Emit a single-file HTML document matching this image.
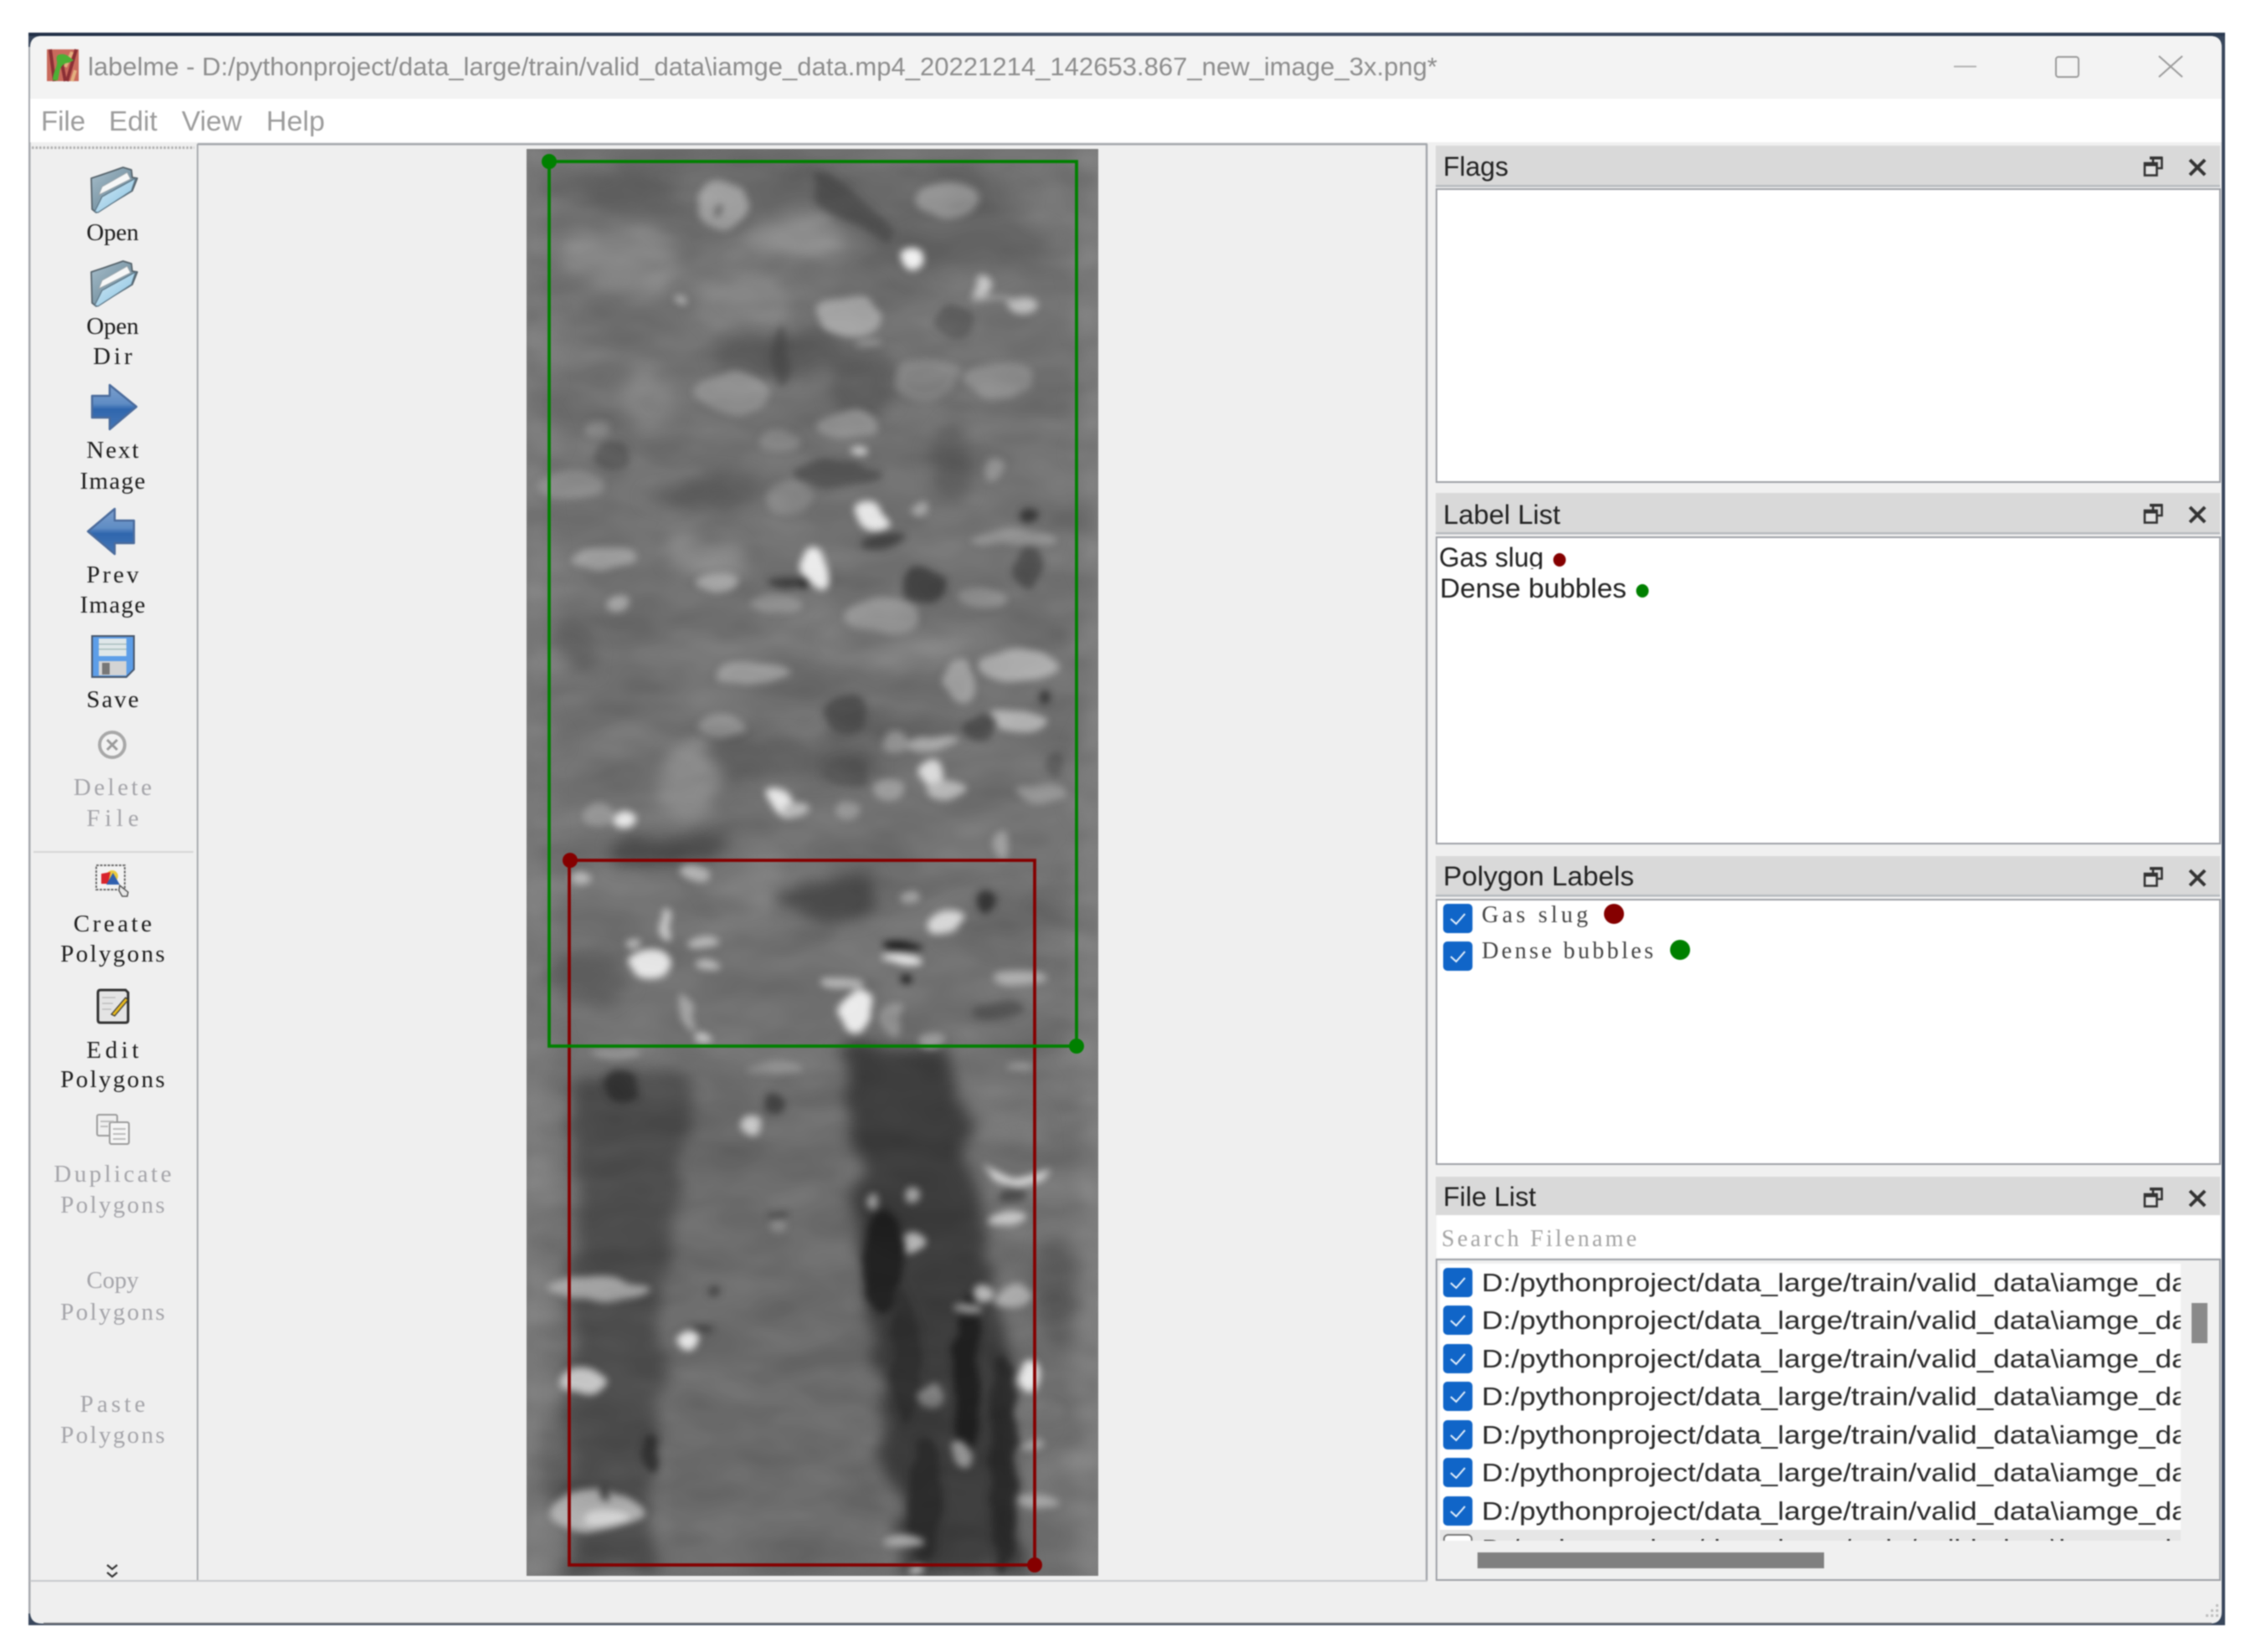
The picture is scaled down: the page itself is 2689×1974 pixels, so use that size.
<!DOCTYPE html>
<html lang="en"><head><meta charset="utf-8"><title>labelme</title>
<style>
html,body{margin:0;padding:0;background:#fff;width:2689px;height:1974px;overflow:hidden}
svg{display:block;position:absolute;left:0;top:0;filter:blur(.7px)}
.s{font-family:"Liberation Sans",sans-serif}
.m{font-family:"Liberation Serif",serif;font-size:29px;fill:#1c1c1c}
.d{fill:#a4a4a9}
.h{font-family:"Liberation Sans",sans-serif;font-size:32px;fill:#222}
.f{font-family:"Liberation Sans",sans-serif;font-size:31px;fill:#2a2a2a}
</style></head><body>
<svg width="2689" height="1974" viewBox="0 0 2689 1974" xmlns="http://www.w3.org/2000/svg">
<defs>
<filter id="b1" filterUnits="userSpaceOnUse" x="560" y="120" width="820" height="1820" color-interpolation-filters="sRGB">
<feTurbulence type="fractalNoise" baseFrequency="0.012 0.022" numOctaves="3" seed="4" result="n"/>
<feDisplacementMap in="SourceGraphic" in2="n" scale="50" xChannelSelector="R" yChannelSelector="G" result="d"/>
<feGaussianBlur in="d" stdDeviation="9"/></filter>
<filter id="b2" filterUnits="userSpaceOnUse" x="560" y="120" width="820" height="1820" color-interpolation-filters="sRGB">
<feTurbulence type="fractalNoise" baseFrequency="0.015 0.03" numOctaves="2" seed="9" result="n"/>
<feDisplacementMap in="SourceGraphic" in2="n" scale="20" xChannelSelector="R" yChannelSelector="G" result="d"/>
<feGaussianBlur in="d" stdDeviation="4.500"/></filter>
<filter id="tex" filterUnits="userSpaceOnUse" x="629" y="178" width="683" height="1704" color-interpolation-filters="sRGB">
<feTurbulence type="fractalNoise" baseFrequency="0.01 0.025" numOctaves="3" seed="21"/>
<feColorMatrix type="matrix" values="1 0 0 0 0 1 0 0 0 0 1 0 0 0 0 0 0 0 0 1"/>
<feGaussianBlur stdDeviation="4"/></filter>
<clipPath id="img"><rect x="629" y="178" width="683" height="1705"/></clipPath>
<clipPath id="fl"><rect x="1720" y="1508" width="885" height="333"/></clipPath>
<clipPath id="r1"><rect x="1716" y="644" width="400" height="36"/></clipPath>
<linearGradient id="top" x1="0" x2="1"><stop offset="0" stop-color="#1f2e45"/><stop offset=".5" stop-color="#46546a"/><stop offset="1" stop-color="#2a3950"/></linearGradient>
<linearGradient id="fb" x1="0" y1="0" x2="1" y2="1"><stop offset="0" stop-color="#a9c0cd"/><stop offset=".5" stop-color="#7f9aa9"/><stop offset="1" stop-color="#6c8594"/></linearGradient>
<linearGradient id="ff" x1="0" y1="0" x2="1" y2="1"><stop offset="0" stop-color="#d6ecf7"/><stop offset="1" stop-color="#84bfdf"/></linearGradient>
<linearGradient id="ar" x1="0" y1="0" x2="0" y2="1"><stop offset="0" stop-color="#7c9fcc"/><stop offset=".42" stop-color="#5f8cc4"/><stop offset=".55" stop-color="#2f66ad"/><stop offset="1" stop-color="#4576b6"/></linearGradient>
<g id="folder">
<path d="M109 213 L127 207 L147 200 L157 203 L158 212 L164 213 L158 228 L115 254 L110 250 Z" fill="url(#fb)" stroke="#56636b" stroke-width="1.800" stroke-linejoin="round"/>
<path d="M118 233 L122 223 L152 206 L156 214 Z" fill="#f6f7f7" stroke="#9aa4aa" stroke-width="1"/>
<path d="M113 253 L122 235 L162 213 L157 228 L117 254 Z" fill="url(#ff)" stroke="#5b7484" stroke-width="1.200" stroke-linejoin="round"/>
</g>
<g id="chk"><rect x="0" y="0" width="35" height="35" rx="5" fill="#1065c8"/><path d="M9 18 L15.500 24 L26 12" fill="none" stroke="#e8f2fc" stroke-width="2"/></g>
<g id="dock">
<path d="M2572 195 V188.500 H2582.500 V201 H2577" fill="none" stroke="#333" stroke-width="2.600"/>
<rect x="2568" y="187" width="15" height="3.500" fill="#333"/>
<rect x="2562" y="195" width="14.500" height="14.500" fill="#e2e2e2" stroke="#333" stroke-width="2.600"/>
<rect x="2561" y="194" width="16" height="4.500" fill="#333"/>
<path d="M2616 191 L2634 209 M2634 191 L2616 209" stroke="#333" stroke-width="4"/>
</g>
</defs>

<!-- window frame -->
<rect x="34" y="39" width="2624" height="1903" fill="#38465b"/>
<rect x="34" y="39" width="2624" height="4" fill="url(#top)"/>
<path d="M50 43 H2640 Q2654 43 2654 57 V1926 Q2654 1940 2640 1940 H50 Q36 1940 36 1926 V57 Q36 43 50 43 Z" fill="#efefef"/>
<rect x="34" y="56" width="2.500" height="1872" fill="#a5a8ad"/>
<rect x="52" y="1939" width="2590" height="2" fill="#6a6d74"/>

<!-- title bar -->
<path d="M50 43 H2640 Q2654 43 2654 57 V118 H36 V57 Q36 43 50 43 Z" fill="#f3f3f3"/>
<g>
<rect x="56" y="59" width="38" height="38" fill="#c96a5c"/>
<path d="M60 59 L65 97 M74 76 L78 97 M91 59 L80 97" stroke="#8b2f35" stroke-width="4"/>
<path d="M86 62 L78 80 M90 84 L86 97" stroke="#e3b07f" stroke-width="4"/>
<path d="M63 96 C63 86 69 80 68 73 C66 66 70 64 77 65 C81 66 85 70 88 72 L82 75 C76 75 72 80 71 86 L69 96 Z" fill="#4cb035"/>
</g>
<text x="105" y="90" class="s" font-size="31" fill="#8d8d8d" textLength="1612" lengthAdjust="spacingAndGlyphs">labelme - D:/pythonproject/data_large/train/valid_data\iamge_data.mp4_20221214_142653.867_new_image_3x.png*</text>
<rect x="2334" y="78.500" width="27" height="2" fill="#b3b3b3"/>
<rect x="2456" y="68" width="27" height="24" rx="3" fill="none" stroke="#9a9a9a" stroke-width="2"/>
<path d="M2579 67 L2607 92 M2607 67 L2579 92" stroke="#9a9a9a" stroke-width="2"/>

<!-- menu -->
<rect x="36" y="118" width="2618" height="52" fill="#fff"/>
<g class="s" font-size="33" fill="#9c9c9c">
<text x="49" y="156" textLength="53" lengthAdjust="spacingAndGlyphs">File</text>
<text x="130" y="156" textLength="58" lengthAdjust="spacingAndGlyphs">Edit</text>
<text x="217" y="156" textLength="72" lengthAdjust="spacingAndGlyphs">View</text>
<text x="318" y="156" textLength="70" lengthAdjust="spacingAndGlyphs">Help</text>
</g>

<!-- toolbar -->
<path d="M38 176.500 H232" stroke="#b0b0b0" stroke-width="3" stroke-dasharray="2.500 2"/>
<rect x="235" y="172" width="2.500" height="1717" fill="#a5a8ad"/>
<use href="#folder"/>
<use href="#folder" y="112"/>
<text class="m" x="103.300" y="287" textLength="62.400">Open</text>
<text class="m" x="103.300" y="399" textLength="62.400">Open</text>
<text class="m" x="111.100" y="435" textLength="46.800">Dir</text>
<path d="M110 473 H131 V460 L163 486 L131 513 V499 H110 Z" fill="url(#ar)" stroke="#4a6b9c" stroke-width="2.500" stroke-linejoin="round"/>
<text class="m" x="103.300" y="547" textLength="62.400">Next</text>
<text class="m" x="95.500" y="584" textLength="78">Image</text>
<path d="M160 622 H137 V608 L105 635 L137 662 V649 H160 Z" fill="url(#ar)" stroke="#4a6b9c" stroke-width="2.500" stroke-linejoin="round"/>
<text class="m" x="103.300" y="696" textLength="62.400">Prev</text>
<text class="m" x="95.500" y="732" textLength="78">Image</text>
<g>
<path d="M110 760 H160 V800 L151 809 H110 Z" fill="#5d9ee8" stroke="#46556a" stroke-width="2"/>
<rect x="118" y="763" width="33" height="21" fill="#dfe7e9"/>
<rect x="118" y="769" width="33" height="1.500" fill="#a8bcbc"/>
<rect x="118" y="775" width="33" height="1.500" fill="#a8bcbc"/>
<rect x="118" y="790" width="33" height="17" fill="#d4d4d4"/>
<rect x="122" y="792" width="9" height="14" fill="#777"/>
</g>
<text class="m" x="103.300" y="845" textLength="62.400">Save</text>
<circle cx="134" cy="890" r="15" fill="#f2f2f2" stroke="#a8a8a8" stroke-width="4"/>
<path d="M128 884 L140 896 M140 884 L128 896" stroke="#9a9a9a" stroke-width="3"/>
<text class="m d" x="87.700" y="950" textLength="93.600">Delete</text>
<text class="m d" x="103.300" y="987" textLength="62.400">File</text>
<rect x="40" y="1017" width="191" height="2" fill="#d6d6d6"/>
<g>
<rect x="115" y="1034" width="34" height="29" fill="#f2f2f2" stroke="#666" stroke-width="2" stroke-dasharray="3 1.500"/>
<circle cx="134" cy="1047" r="7" fill="#eacb3c"/>
<path d="M121 1044 L132 1042 L129 1056 L121 1056 Z" fill="#d8242c"/>
<path d="M127 1057 L135 1043 L143 1057 Z" fill="#2f5fae"/>
<path d="M143 1058 L153 1066 L152 1071 L146 1071 L142 1064 Z" fill="#e8e8e8" stroke="#555" stroke-width="1.500"/>
</g>
<text class="m" x="87.700" y="1113" textLength="93.600">Create</text>
<text class="m" x="72.100" y="1149" textLength="124.800">Polygons</text>
<g>
<path d="M120 1183 H150 L153 1186 V1219 Q153 1222 150 1222 H120 Q117 1222 117 1219 V1186 Q117 1183 120 1183 Z" fill="#e4e4e4" stroke="#333" stroke-width="3"/>
<path d="M122 1192H138M122 1199H135M122 1206H133" stroke="#bbb" stroke-width="1.500"/>
<path d="M133 1212 L150 1192 L153 1195 L137 1214 Z" fill="#e6b81e" stroke="#333" stroke-width="1.200"/>
</g>
<text class="m" x="103.300" y="1264" textLength="62.400">Edit</text>
<text class="m" x="72.100" y="1299" textLength="124.800">Polygons</text>
<g fill="#efefef" stroke="#9a9a9a" stroke-width="2">
<rect x="116" y="1332" width="24" height="25" rx="2"/>
<rect x="131" y="1341" width="23" height="26" rx="2" fill="#f5f5f5"/>
<path d="M120 1340h16M120 1346h9M135 1349h15M135 1355h15M135 1361h15" stroke="#bbb" stroke-width="2"/>
</g>
<text class="m d" x="64.300" y="1412" textLength="140.400">Duplicate</text>
<text class="m d" x="72.100" y="1449" textLength="124.800">Polygons</text>
<text class="m d" x="103.300" y="1539" textLength="62.400">Copy</text>
<text class="m d" x="72.100" y="1577" textLength="124.800">Polygons</text>
<text class="m d" x="95.500" y="1687" textLength="78">Paste</text>
<text class="m d" x="72.100" y="1724" textLength="124.800">Polygons</text>
<path d="M128 1870 L134 1875 L140 1870 M128 1879 L134 1884 L140 1879" fill="none" stroke="#333" stroke-width="2.200"/>

<!-- canvas -->
<rect x="237" y="172" width="1467" height="1716" fill="#efefef"/>
<rect x="236" y="171" width="1469" height="2.500" fill="#a5a8ad"/>
<rect x="1703" y="172" width="2.500" height="1717" fill="#a5a8ad"/>
<rect x="36" y="1888" width="1669" height="2" fill="#c8c9cc"/>

<g clip-path="url(#img)">
<rect x="629" y="178" width="683" height="1705" fill="#717171"/>
<g filter="url(#b1)">
<rect x="600" y="150" width="58" height="1760" fill="#787878"/>
<rect x="1290" y="150" width="50" height="1760" fill="#7c7c7c"/>
<g transform="translate(620,170) scale(.4464,.574)">
<ellipse cx="700" cy="100" rx="650" ry="70" fill="#686868"/>
<ellipse cx="300" cy="100" rx="100" ry="50" fill="#5f5f5f"/>
<ellipse cx="1180" cy="210" rx="250" ry="70" fill="#646464"/>
<ellipse cx="280" cy="240" rx="170" ry="70" fill="#828282"/>
<ellipse cx="730" cy="190" rx="140" ry="45" fill="#868686"/>
<ellipse cx="600" cy="330" rx="130" ry="55" fill="#838383"/>
<ellipse cx="700" cy="440" rx="170" ry="60" fill="#606060"/>
<ellipse cx="920" cy="510" rx="90" ry="70" fill="#585858"/>
<ellipse cx="350" cy="540" rx="70" ry="55" fill="#828282"/>
<ellipse cx="1160" cy="680" rx="55" ry="80" fill="#5c5c5c"/>
<ellipse cx="500" cy="740" rx="160" ry="35" fill="#5f5f5f"/>
<ellipse cx="520" cy="860" rx="90" ry="55" fill="#8a8a8a"/>
<ellipse cx="1000" cy="1050" rx="200" ry="60" fill="#7a7a7a"/>
<ellipse cx="150" cy="1050" rx="60" ry="40" fill="#5e5e5e"/>
<ellipse cx="700" cy="1290" rx="260" ry="50" fill="#5d5d5d"/>
<ellipse cx="460" cy="1330" rx="70" ry="75" fill="#8a8a8a"/>
<ellipse cx="1000" cy="1220" rx="200" ry="35" fill="#626262"/>
<ellipse cx="400" cy="1465" rx="150" ry="35" fill="#4e4e4e"/>
</g>
<g transform="translate(620,1000) scale(.4464,.574)">
<rect x="400" y="500" width="560" height="1040" fill="#6b6b6b"/>
<path d="M140 560 C180 480 400 470 450 520 L440 780 L380 960 L370 1530 L130 1530 L110 1250 L150 1000 L140 800 Z" fill="#4c4c4c"/>
<path d="M880 430 L1150 430 L1240 800 L1260 950 L1350 1530 L1030 1530 L950 1060 L900 800 Z" fill="#3c3c3c"/>
<ellipse cx="830" cy="130" rx="130" ry="50" fill="#4a4a4a"/>
<ellipse cx="1300" cy="170" rx="170" ry="60" fill="#6a6a6a"/>
<ellipse cx="1440" cy="950" rx="60" ry="120" fill="#5e5e5e"/>
<ellipse cx="200" cy="290" rx="100" ry="60" fill="#5e5e5e"/>
<ellipse cx="600" cy="100" rx="120" ry="60" fill="#7c7c7c"/>
<ellipse cx="90" cy="1300" rx="40" ry="90" fill="#646464"/>
<ellipse cx="1300" cy="600" rx="90" ry="50" fill="#7a7a7a"/>
</g>
</g>
<g filter="url(#b2)" opacity=".92">
<g transform="translate(620,170) scale(.4464,.574)">
<path d="M780 60 L830 70 L1020 190 L990 210 L810 130 Z" fill="#4e4e4e"/>
<ellipse cx="540" cy="130" rx="60" ry="48" fill="#a2a2a2"/>
<ellipse cx="530" cy="140" rx="8" ry="15" fill="#555"/>
<ellipse cx="1150" cy="120" rx="85" ry="38" fill="#989898"/>
<ellipse cx="1050" cy="243" rx="33" ry="22" fill="#fff"/>
<ellipse cx="880" cy="360" rx="85" ry="42" fill="#a8a8a8"/>
<ellipse cx="930" cy="420" rx="40" ry="10" fill="#999"/>
<ellipse cx="430" cy="328" rx="14" ry="6" fill="#bbb"/>
<ellipse cx="1235" cy="300" rx="22" ry="22" fill="#ccc"/>
<ellipse cx="1350" cy="345" rx="42" ry="16" fill="#c4c4c4"/>
<path d="M1220 315 L1340 335" stroke="#aaa" stroke-width="8"/>
<ellipse cx="1170" cy="370" rx="50" ry="38" fill="#565656"/>
<ellipse cx="700" cy="450" rx="26" ry="60" fill="#505050"/>
<ellipse cx="570" cy="520" rx="95" ry="42" fill="#8e8e8e"/>
<ellipse cx="1090" cy="490" rx="85" ry="42" fill="#878787"/>
<ellipse cx="1280" cy="495" rx="95" ry="36" fill="#8c8c8c"/>
<ellipse cx="880" cy="590" rx="85" ry="27" fill="#969696"/>
<ellipse cx="700" cy="620" rx="55" ry="27" fill="#8c8c8c"/>
<ellipse cx="910" cy="645" rx="22" ry="11" fill="#d2d2d2"/>
<ellipse cx="850" cy="690" rx="120" ry="20" fill="#505050"/>
<ellipse cx="1265" cy="680" rx="27" ry="27" fill="#979797"/>
<ellipse cx="210" cy="595" rx="38" ry="16" fill="#8c8c8c"/>
<ellipse cx="250" cy="650" rx="50" ry="30" fill="#555"/>
<ellipse cx="140" cy="715" rx="85" ry="30" fill="#8c8c8c"/>
<ellipse cx="720" cy="735" rx="60" ry="35" fill="#868686"/>
<ellipse cx="945" cy="780" rx="44" ry="24" fill="#f2f2f2" transform="rotate(20 945 780)"/>
<ellipse cx="1075" cy="760" rx="22" ry="15" fill="#aaa"/>
<ellipse cx="980" cy="830" rx="65" ry="15" fill="#444"/>
<ellipse cx="1365" cy="772" rx="28" ry="20" fill="#333"/>
<ellipse cx="1320" cy="822" rx="115" ry="17" fill="#979797"/>
<ellipse cx="1360" cy="885" rx="36" ry="42" fill="#4a4a4a"/>
<ellipse cx="230" cy="868" rx="92" ry="26" fill="#a0a0a0"/>
<ellipse cx="535" cy="915" rx="55" ry="20" fill="#aaa"/>
<ellipse cx="795" cy="895" rx="28" ry="48" fill="#f7f7f7" transform="rotate(-35 795 895)"/>
<ellipse cx="715" cy="915" rx="52" ry="15" fill="#3c3c3c"/>
<ellipse cx="762" cy="920" rx="15" ry="15" fill="#222"/>
<ellipse cx="1085" cy="925" rx="58" ry="38" fill="#404040"/>
<ellipse cx="1240" cy="955" rx="65" ry="22" fill="#8f8f8f"/>
<ellipse cx="970" cy="985" rx="95" ry="38" fill="#989898"/>
<ellipse cx="690" cy="965" rx="62" ry="15" fill="#8f8f8f"/>
<ellipse cx="265" cy="960" rx="26" ry="20" fill="#aaa"/>
<ellipse cx="1340" cy="1090" rx="105" ry="32" fill="#b0b0b0"/>
<ellipse cx="1180" cy="1120" rx="42" ry="42" fill="#a6a6a6"/>
<ellipse cx="630" cy="1105" rx="105" ry="23" fill="#a0a0a0"/>
<ellipse cx="1410" cy="1155" rx="15" ry="13" fill="#333"/>
<ellipse cx="1330" cy="1200" rx="85" ry="26" fill="#bbb"/>
<ellipse cx="880" cy="1195" rx="60" ry="42" fill="#4a4a4a"/>
<ellipse cx="1230" cy="1220" rx="42" ry="32" fill="#4a4a4a"/>
<ellipse cx="540" cy="1215" rx="65" ry="18" fill="#969696"/>
<ellipse cx="1100" cy="1250" rx="80" ry="10" fill="#aaa"/>
<ellipse cx="1000" cy="1250" rx="30" ry="22" fill="#999"/>
<ellipse cx="1100" cy="1315" rx="34" ry="32" fill="#e4e4e4"/>
<ellipse cx="1140" cy="1345" rx="62" ry="16" fill="#bfbfbf"/>
<ellipse cx="1440" cy="1295" rx="24" ry="25" fill="#565656"/>
<ellipse cx="880" cy="1310" rx="62" ry="30" fill="#555"/>
<ellipse cx="700" cy="1375" rx="46" ry="22" fill="#f2f2f2" transform="rotate(25 700 1375)"/>
<ellipse cx="745" cy="1392" rx="42" ry="10" fill="#bfbfbf"/>
<ellipse cx="985" cy="1345" rx="42" ry="20" fill="#a0a0a0"/>
<ellipse cx="880" cy="1385" rx="32" ry="15" fill="#989898"/>
<ellipse cx="1400" cy="1350" rx="62" ry="15" fill="#9a9a9a"/>
<ellipse cx="280" cy="1410" rx="36" ry="15" fill="#f2f2f2"/>
<ellipse cx="210" cy="1400" rx="42" ry="26" fill="#969696"/>
<ellipse cx="1290" cy="1465" rx="26" ry="32" fill="#a4a4a4"/>
</g>
<g transform="translate(620,1000) scale(.4464,.574)">
<ellipse cx="1240" cy="135" rx="28" ry="26" fill="#303030"/>
<ellipse cx="1140" cy="175" rx="42" ry="20" fill="#e0e0e0"/>
<ellipse cx="1040" cy="125" rx="26" ry="10" fill="#aaa"/>
<ellipse cx="350" cy="265" rx="58" ry="32" fill="#f2f2f2"/>
<ellipse cx="390" cy="180" rx="16" ry="32" fill="#cfcfcf"/>
<ellipse cx="490" cy="220" rx="42" ry="12" fill="#c0c0c0"/>
<ellipse cx="510" cy="270" rx="32" ry="13" fill="#c0c0c0"/>
<ellipse cx="310" cy="220" rx="20" ry="12" fill="#c0c0c0"/>
<ellipse cx="450" cy="360" rx="16" ry="46" fill="#ababab" transform="rotate(-30 450 360)"/>
<ellipse cx="495" cy="415" rx="20" ry="15" fill="#ccc"/>
<ellipse cx="160" cy="85" rx="26" ry="15" fill="#bbb"/>
<ellipse cx="475" cy="72" rx="42" ry="15" fill="#bbb"/>
<ellipse cx="1030" cy="225" rx="62" ry="12" fill="#0e0e0e"/>
<ellipse cx="1025" cy="258" rx="58" ry="10" fill="#f0f0f0"/>
<ellipse cx="1035" cy="295" rx="16" ry="8" fill="#0e0e0e"/>
<ellipse cx="905" cy="360" rx="46" ry="46" fill="#f7f7f7"/>
<ellipse cx="860" cy="305" rx="52" ry="12" fill="#bfbfbf"/>
<ellipse cx="1000" cy="380" rx="32" ry="32" fill="#999"/>
<ellipse cx="1100" cy="415" rx="32" ry="15" fill="#999"/>
<ellipse cx="1340" cy="295" rx="72" ry="20" fill="#b0b0b0"/>
<ellipse cx="1280" cy="360" rx="62" ry="20" fill="#555"/>
<ellipse cx="260" cy="450" rx="62" ry="10" fill="#979797"/>
<ellipse cx="680" cy="480" rx="72" ry="12" fill="#8e8e8e"/>
<ellipse cx="1340" cy="482" rx="32" ry="10" fill="#999"/>
<ellipse cx="270" cy="520" rx="42" ry="32" fill="#2e2e2e"/>
<ellipse cx="680" cy="560" rx="25" ry="20" fill="#3e3e3e"/>
<ellipse cx="625" cy="605" rx="25" ry="20" fill="#d0d0d0"/>
<path d="M1240 690 L1320 715 L1420 690 L1400 715 L1325 735 L1260 715 Z" fill="#e4e4e4"/>
<ellipse cx="1310" cy="795" rx="52" ry="15" fill="#d0d0d0"/>
<ellipse cx="1320" cy="750" rx="40" ry="12" fill="#444"/>
<ellipse cx="950" cy="755" rx="16" ry="16" fill="#ababab"/>
<ellipse cx="1050" cy="755" rx="22" ry="16" fill="#ababab"/>
<ellipse cx="1050" cy="850" rx="32" ry="20" fill="#c0c0c0"/>
<ellipse cx="975" cy="880" rx="55" ry="110" fill="#1e1e1e"/>
<ellipse cx="1200" cy="1120" rx="38" ry="170" fill="#1c1c1c"/>
<ellipse cx="1295" cy="1310" rx="38" ry="230" fill="#282828"/>
<ellipse cx="1085" cy="1380" rx="48" ry="130" fill="#2a2a2a"/>
<ellipse cx="1035" cy="1080" rx="40" ry="140" fill="#2e2e2e"/>
<ellipse cx="695" cy="810" rx="25" ry="15" fill="#8a8a8a"/>
<rect x="670" y="782" width="52" height="7" fill="#333"/>
<ellipse cx="210" cy="940" rx="135" ry="22" fill="#aaa"/>
<ellipse cx="1240" cy="945" rx="26" ry="16" fill="#c0c0c0"/>
<ellipse cx="1320" cy="955" rx="46" ry="20" fill="#b0b0b0"/>
<ellipse cx="1200" cy="980" rx="42" ry="10" fill="#999"/>
<ellipse cx="450" cy="1048" rx="32" ry="15" fill="#f2f2f2"/>
<ellipse cx="485" cy="1025" rx="32" ry="6" fill="#333"/>
<ellipse cx="525" cy="950" rx="15" ry="15" fill="#444"/>
<ellipse cx="170" cy="1135" rx="62" ry="30" fill="#d0d0d0"/>
<ellipse cx="1360" cy="1125" rx="30" ry="36" fill="#f2f2f2"/>
<ellipse cx="1395" cy="1200" rx="62" ry="22" fill="#7b7b7b"/>
<ellipse cx="1100" cy="1165" rx="36" ry="20" fill="#7b7b7b"/>
<ellipse cx="1185" cy="1285" rx="26" ry="26" fill="#9c9c9c"/>
<ellipse cx="1370" cy="1265" rx="26" ry="12" fill="#ababab"/>
<ellipse cx="1395" cy="1385" rx="52" ry="12" fill="#ababab"/>
<ellipse cx="210" cy="1400" rx="125" ry="42" fill="#b4b4b4"/>
<ellipse cx="240" cy="1420" rx="62" ry="15" fill="#ddd"/>
<ellipse cx="225" cy="1365" rx="10" ry="16" fill="#333"/>
<ellipse cx="350" cy="1280" rx="22" ry="42" fill="#2e2e2e"/>
<ellipse cx="1035" cy="1470" rx="62" ry="15" fill="#ababab"/>
<ellipse cx="1060" cy="1528" rx="20" ry="8" fill="#f2f2f2"/>
</g>
</g>
<rect x="629" y="178" width="683" height="1060" filter="url(#tex)" opacity=".16" style="mix-blend-mode:overlay"/>
<!-- polygons -->
<rect x="680" y="1028" width="556" height="842" fill="none" stroke="#850000" stroke-width="3.800"/>
<circle cx="681" cy="1028" r="9" fill="#850000"/>
<circle cx="1236" cy="1870" r="9" fill="#850000"/>
<rect x="656" y="193" width="630" height="1057" fill="none" stroke="#008000" stroke-width="3.800"/>
<circle cx="656" cy="193" r="9" fill="#008000"/>
<circle cx="1286" cy="1250" r="9" fill="#008000"/>
</g>

<!-- right docks -->
<rect x="1706" y="170" width="948" height="1719" fill="#f0f0f0"/>
<!-- Flags -->
<rect x="1715" y="174" width="937" height="47" fill="#d9d9d9"/>
<rect x="1715" y="221" width="937" height="2.500" fill="#b7babe"/>
<rect x="1716" y="226" width="936" height="350" fill="#fff" stroke="#9da0a6" stroke-width="2"/>
<text class="h" x="1724" y="210" textLength="78" lengthAdjust="spacingAndGlyphs">Flags</text>
<use href="#dock"/>
<!-- Label List -->
<rect x="1715" y="589" width="937" height="47" fill="#d9d9d9"/>
<rect x="1715" y="636" width="937" height="2.500" fill="#b7babe"/>
<rect x="1716" y="642" width="936" height="366" fill="#fff" stroke="#9da0a6" stroke-width="2"/>
<text class="h" x="1724" y="626" textLength="140" lengthAdjust="spacingAndGlyphs">Label List</text>
<use href="#dock" y="415"/>
<text class="h" x="1719" y="677" textLength="125" lengthAdjust="spacingAndGlyphs" clip-path="url(#r1)">Gas slug</text>
<ellipse cx="1863" cy="669" rx="7.500" ry="8" fill="#850000"/>
<text class="h" x="1720" y="714" textLength="223" lengthAdjust="spacingAndGlyphs">Dense bubbles</text>
<ellipse cx="1962" cy="706" rx="7.500" ry="8" fill="#008000"/>
<!-- Polygon Labels -->
<rect x="1715" y="1023" width="937" height="46" fill="#d9d9d9"/>
<rect x="1715" y="1069" width="937" height="2.500" fill="#b7babe"/>
<rect x="1716" y="1075" width="936" height="316" fill="#fff" stroke="#9da0a6" stroke-width="2"/>
<text class="h" x="1724" y="1058" textLength="228" lengthAdjust="spacingAndGlyphs">Polygon Labels</text>
<use href="#dock" y="849"/>
<use href="#chk" x="1724" y="1080"/>
<use href="#chk" x="1724" y="1125"/>
<text x="1770" y="1102" font-family="Liberation Serif,serif" font-size="28" fill="#444" textLength="127">Gas slug</text>
<circle cx="1928" cy="1092" r="12" fill="#850000"/>
<text x="1770" y="1145" font-family="Liberation Serif,serif" font-size="28" fill="#444" textLength="205">Dense bubbles</text>
<circle cx="2007" cy="1135" r="12" fill="#008000"/>
<!-- File List -->
<rect x="1715" y="1406" width="937" height="46" fill="#d9d9d9"/>
<text class="h" x="1724" y="1441" textLength="111" lengthAdjust="spacingAndGlyphs">File List</text>
<use href="#dock" y="1232"/>
<rect x="1716" y="1452" width="936" height="51" fill="#fff"/>
<text x="1722" y="1489" font-family="Liberation Serif,serif" font-size="28" fill="#a4a4a4" textLength="233">Search Filename</text>
<rect x="1716" y="1505" width="936" height="383" fill="#f0f0f0" stroke="#9da0a6" stroke-width="2"/>
<rect x="1720" y="1510" width="885" height="331" fill="#fff"/>
<rect x="1720" y="1828" width="885" height="13" fill="#e6e6e6"/>
<g clip-path="url(#fl)">
<g>
<use href="#chk" x="1724" y="1515"/><use href="#chk" x="1724" y="1560"/><use href="#chk" x="1724" y="1606"/><use href="#chk" x="1724" y="1651"/><use href="#chk" x="1724" y="1697"/><use href="#chk" x="1724" y="1742"/><use href="#chk" x="1724" y="1788"/>
<rect x="1725" y="1834" width="33" height="33" rx="5" fill="#fff" stroke="#777" stroke-width="2"/>
</g>
<g class="f">
<text x="1770" y="1543" textLength="873" lengthAdjust="spacingAndGlyphs">D:/pythonproject/data_large/train/valid_data\iamge_data</text>
<text x="1770" y="1588" textLength="873" lengthAdjust="spacingAndGlyphs">D:/pythonproject/data_large/train/valid_data\iamge_data</text>
<text x="1770" y="1634" textLength="873" lengthAdjust="spacingAndGlyphs">D:/pythonproject/data_large/train/valid_data\iamge_data</text>
<text x="1770" y="1679" textLength="873" lengthAdjust="spacingAndGlyphs">D:/pythonproject/data_large/train/valid_data\iamge_data</text>
<text x="1770" y="1725" textLength="873" lengthAdjust="spacingAndGlyphs">D:/pythonproject/data_large/train/valid_data\iamge_data</text>
<text x="1770" y="1770" textLength="873" lengthAdjust="spacingAndGlyphs">D:/pythonproject/data_large/train/valid_data\iamge_data</text>
<text x="1770" y="1816" textLength="873" lengthAdjust="spacingAndGlyphs">D:/pythonproject/data_large/train/valid_data\iamge_data</text>
<text x="1770" y="1861" textLength="873" lengthAdjust="spacingAndGlyphs">D:/pythonproject/data_large/train/valid_data\iamge_data</text>
</g>
</g>
<rect x="2618" y="1557" width="19" height="48" fill="#8a8a8a"/>
<rect x="1765" y="1855" width="414" height="19" fill="#808080"/>
<!-- status grip -->
<g fill="#bcbcbc"><rect x="2647" y="1917" width="3" height="3"/><rect x="2641" y="1923" width="3" height="3"/><rect x="2647" y="1923" width="3" height="3"/><rect x="2635" y="1929" width="3" height="3"/><rect x="2641" y="1929" width="3" height="3"/><rect x="2647" y="1929" width="3" height="3"/></g>
</svg>
</body></html>
